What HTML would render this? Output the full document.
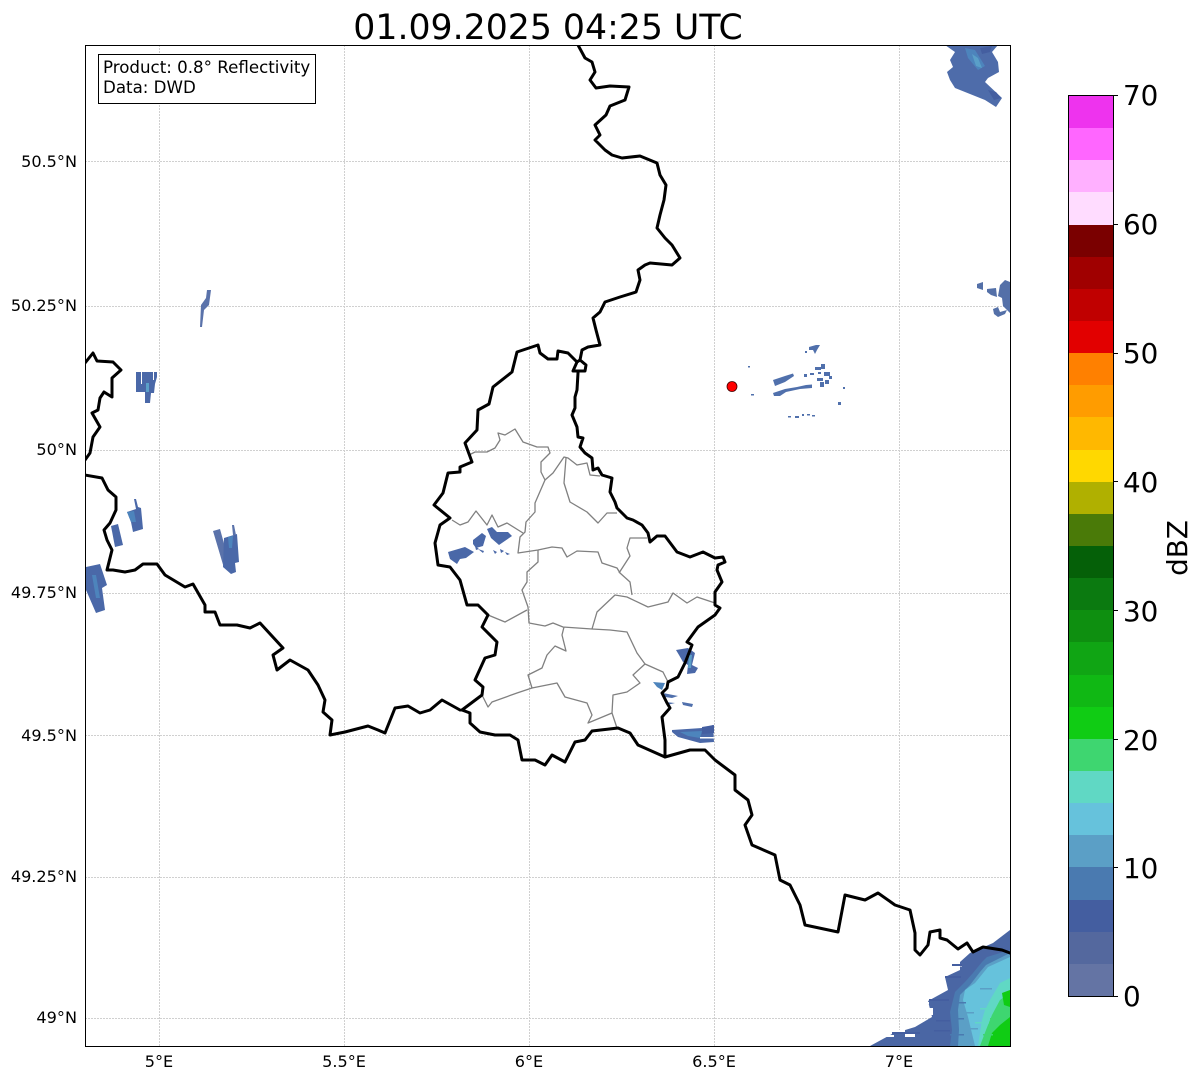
<!DOCTYPE html>
<html><head><meta charset="utf-8"><style>
html,body{margin:0;padding:0;background:#fff}
body{position:relative;width:1202px;height:1081px;overflow:hidden}
svg{display:block;position:absolute;left:0;top:0}
text,.l{font-family:"DejaVu Sans","Liberation Sans",sans-serif;color:#000;fill:#000}
.l{position:absolute;line-height:1;white-space:nowrap}
.y{right:1125px;font-size:16.1px}
.x{font-size:16.1px;top:1054px;transform:translateX(-50%)}
.c{left:1123px;font-size:27.8px}
.t{position:absolute;left:1113px;width:5px;height:1px;background:#000}
#fr{position:absolute;left:85px;top:45px;width:926px;height:1002px;box-sizing:border-box;border:1px solid #000}
#ib{position:absolute;left:98px;top:54px;width:218px;height:50px;box-sizing:border-box;border:1px solid #000;background:#fff}
#cb{position:absolute;left:1068px;top:95px;width:46px;height:902px;box-sizing:border-box;border:1px solid #000;display:flex;flex-direction:column-reverse}
#cb div{flex:1}
</style></head><body>
<svg width="1202" height="1081" viewBox="0 0 1202 1081" xmlns="http://www.w3.org/2000/svg">
<defs><clipPath id="ax"><rect x="85.5" y="45.5" width="925" height="1001"/></clipPath></defs>
<g clip-path="url(#ax)">
<g stroke="#d0d0d0" stroke-width="1" stroke-dasharray="2 1" fill="none">
<path d="M159.5 45V1046M344.5 45V1046M529.5 45V1046M714.5 45V1046M899.5 45V1046"/>
<path d="M85 161.5H1010M85 306.5H1010M85 450.5H1010M85 593.5H1010M85 735.5H1010M85 877.5H1010M85 1018.5H1010"/>
</g>
<!-- radar: top right -->
<g>
<path fill="#4e6caa" d="M945 45L998 45L992 52L998 62L999 72L988 78L985 82L1002 98L996 107L985 100L970 94L955 88L950 80L947 72L953 67L950 60L955 52Z"/>
<path fill="#4d84bc" d="M965 48L975 50L985 66L978 70L968 58Z"/>
<path fill="#5a9fc8" d="M972 54L978 58L982 68L976 66Z"/>
<path fill="#445ea0" d="M980 48L992 46L990 52L982 54ZM988 90L996 92L1001 98L994 100Z"/>
<!-- radar: right edge -->
<path fill="#5470a8" d="M977 284L983 282L983 290L977 288ZM987 289L996 288L997 297L991 295L987 292ZM1000 285L1005 280L1010 282V313L1003 306L1002 298L998 296ZM993 309L998 307L1000 312L1007 310L1005 314L998 317L994 314Z"/>
<!-- small centre-right -->
<g fill="#5070ac">
<path d="M773 380L785 376L793 373.500L794 376L785 382L775 386Z"/>
<path d="M773 393L785 389L797 387L806 385L812 384.500L812 388L800 389L786 392L780 396L774 396Z"/>
<path d="M809 347L816 345L820 345L817 350L815 354L813 350L809 350Z"/>
<rect x="815" y="367" width="6" height="3"/><rect x="821" y="364" width="4" height="5"/><rect x="824" y="372" width="6" height="4"/><rect x="817" y="378" width="6" height="3"/><rect x="820" y="382" width="4" height="5"/><rect x="825" y="380" width="4" height="4"/><rect x="829" y="376" width="3" height="3"/><rect x="818" y="372" width="3" height="2"/>
<rect x="804" y="374" width="3" height="3"/><rect x="810" y="373" width="4" height="2"/><rect x="748" y="366" width="2" height="1.500"/><rect x="751" y="394" width="3" height="1.500"/><rect x="843" y="387" width="2" height="2"/><rect x="838" y="402" width="3" height="3"/><rect x="788" y="416" width="3" height="1.500"/><rect x="795" y="416" width="4" height="2"/><rect x="802" y="414" width="2" height="2"/><rect x="807" y="414" width="3" height="1.500"/><rect x="812" y="415" width="3" height="1.500"/><rect x="805" y="351" width="2" height="2"/>
</g>
<!-- left echoes -->
<path fill="#4a68a8" d="M136 372H157V377L155 384L154 393L151 393L150 403L145 403L145 392L136 392Z"/>
<path fill="#5a9fc8" d="M146 383H149V392H146Z"/>
<path fill="#ffffff" d="M141 372H142V384H141ZM153 372H154V380H153Z"/>
<path fill="#4a68a8" d="M127 512L136 509L134 499L136 499L138 507L141 508L143 529L133 532L131 522Z"/>
<path fill="#4d84bc" d="M127 512L134 511L136 522L131 522Z"/>
<path fill="#4a68a8" d="M111 526L118 524L123 545L115 547Z"/>
<path fill="#4a68a8" d="M86 567L100 564L107 585L102 588L105 610L96 613L86 590Z"/>
<path fill="#4d84bc" d="M92 575L96 575L100 598L96 598Z"/>
<path fill="#5a72aa" d="M213 531L220 529L230 565L224 568Z"/>
<path fill="#4a68a8" d="M224 538L237 534L239 562L235 563L236 572L231 574L223 567Z"/>
<path fill="#4d84bc" d="M228 537L233 536L232 548L229 548Z"/>
<path fill="#5a72aa" d="M232 525L234 525L236 535L233 535Z"/>
<path fill="#5a72aa" d="M207 290L211 290L209 305L204 310L202 327L200 327L201 305L206 298Z"/>
<!-- centre Luxembourg echoes -->
<g fill="#4a68a8">
<path d="M448 552L465 547L474 552L466 558L460 559L457 564L450 559Z"/>
<path d="M473 540L482 533L486 536L483 546L476 548L473 544Z"/>
<path d="M487 529L492 527L497 532L508 532L512 536L499 545L491 538Z"/>
<path d="M478 549L484 551L483 553ZM493 550L497 552L495 554ZM500 549L504 551L501 553ZM505 552L510 554L507 555ZM475 546L479 549L476 550Z"/>
</g>
<!-- SE echoes -->
<path fill="#4a68a8" d="M676 650L688 648L695 653L692 665L698 668L695 673L687 674L688 665L683 662L679 655Z"/>
<path fill="#5a9fc8" d="M689 655L692 655L691 668L688 668Z"/>
<path fill="#4d84bc" d="M653 682L665 683L662 690L657 687Z"/>
<path fill="#5070ac" d="M663 693L678 696L672 698L665 697ZM665 702L675 703L667 705ZM682 702L693 704L692 707L683 705Z"/>
<path fill="#4a68a8" d="M672 730L702 728L713 725L714 742L700 743L678 737L672 732Z"/>
<path fill="#4d84bc" d="M680 732L702 731L700 738L688 736Z"/>
<path fill="#445ea0" d="M702 727L714 725L714 733L702 734Z"/>
<path fill="#fff" d="M700 737H714V738.500H700Z"/>
<!-- bottom right -->
<path fill="#4a66a4" d="M870 1046L892 1034L915 1027L932 1017L928 1001L948 990L945 977L960 970L960 962L970 953L993 943L1010 930V1046Z"/>
<path fill="#4a7ab0" d="M950 1046L952 1030L950 1012L955 992L965 982L973 973L982 962L987 957L1010 950V1046Z"/>
<path fill="#5b9fc6" d="M958 1046L959 1030L958 1010L960 995L970 985L980 972L986 965L1010 953V1046Z"/>
<path fill="#66c2dc" d="M975 1046L968 1017L963 1000L965 990L975 983L988 967L1010 957V1046Z"/>
<path fill="#60d8c4" d="M978 1046L982 1020L985 1010L990 1000L1000 983L1010 978V1046Z"/>
<path fill="#3ed670" d="M980 1046L986 1030L992 1015L1000 1000L1010 993V1046Z"/>
<path fill="#10cc14" d="M988 1046L992 1033L1000 1025L1010 1017V1046ZM1002 993L1010 990V1007L1004 1005Z"/>
<g fill="#fff">
<rect x="860" y="1035" width="34" height="2"/><rect x="885" y="1030" width="20" height="2"/><rect x="905" y="1034" width="10" height="3"/>
<rect x="915" y="1002" width="14" height="2"/><rect x="935" y="972" width="14" height="2.500"/><rect x="950" y="965" width="12" height="1.500"/>
<rect x="928" y="1008" width="5" height="7"/>
</g>
<g fill="#445ea0">
<rect x="892" y="1032" width="28" height="2"/><rect x="929" y="999" width="20" height="2"/><rect x="945" y="976" width="16" height="2"/><rect x="952" y="964" width="10" height="2"/>
<rect x="936" y="1020" width="14" height="1.500"/><rect x="934" y="1030" width="16" height="1.500"/>
</g>
<g fill="#4a7ab0"><rect x="952" y="1018" width="12" height="1.500"/><rect x="950" y="1034" width="14" height="1.500"/><rect x="958" y="1002" width="8" height="1.500"/></g>
<g fill="#5b9fc6"><rect x="962" y="1012" width="12" height="1.500"/><rect x="968" y="1028" width="10" height="1.500"/><rect x="980" y="988" width="12" height="1.500"/></g>
<g fill="#60d8c4"><rect x="975" y="1022" width="14" height="1.500"/><rect x="980" y="1008" width="12" height="1.500"/></g>
<g fill="#3ed670"><rect x="983" y="1034" width="10" height="1.500"/><rect x="990" y="1018" width="10" height="1.500"/></g>
<!-- gray admin borders -->
<g fill="none" stroke="#808080" stroke-width="1.300" stroke-linejoin="round">
<path d="M469 455L475 452L487 452L495 448L500 440L498 433L505 435L515 429L523 442L537 447L548 447L550 453L541 462L541 472L545 480L535 503L535 512L526 522L525 532L520 537L518 553L538 550L552 547L562 548L567 557L577 551L598 552L602 563L617 568L620 573L630 582L632 595"/>
<path d="M545 480L553 473L564 457L568 458L577 465L587 463L590 475L600 476"/>
<path d="M566 458L564 483L570 502L587 512L598 523L607 513L617 513"/>
<path d="M452 520L460 525L468 522L476 511L487 525L492 515L498 527L507 523L523 533"/>
<path d="M647 538L630 538L627 548L630 556L619 573"/>
<path d="M538 550L538 562L527 572L527 582L522 590L528 607L529 623L545 626L553 623L563 627L592 629L610 630L627 632L637 653L645 664L633 675L640 683L627 692L613 695L612 713L617 728"/>
<path d="M488 615L505 622L527 610"/>
<path d="M592 629L597 612L615 595L627 597L648 607L668 602L673 593L687 603L697 597L715 603"/>
<path d="M564 627L562 635L566 651L555 646L547 655L542 668L528 675L532 688L557 683L565 697L587 703L592 715L588 723L612 713"/>
<path d="M482 695L488 707L492 702L517 693L532 688"/>
<path d="M645 664L663 672L668 682"/>
</g>
<!-- black country borders -->
<g fill="none" stroke="#000" stroke-width="3" stroke-linejoin="round" stroke-linecap="round">
<path d="M578 45L585 58L592 62L595 72L590 80L596 88L610 86L629 87L625 100L610 106L606 115L595 125L600 135L595 140L605 150L612 155L622 158L640 156L657 163L660 175L666 185L664 200L660 215L657 228L665 238L672 245L680 258L672 265L650 263L645 265L638 270L640 280L636 292L620 297L605 302L600 312L593 318L596 330L600 345L588 347L582 350L580 360L586 365L585 371L573 371L577 362L580 360M578 373L577 390L575 397L575 408L572 415L577 427L578 437L583 438L580 447L585 453L592 458L593 470L598 468L602 475L612 478L610 492L615 502L617 508L627 518L633 520L642 525L648 533L650 542L657 536L665 536L677 552L690 557L703 552L715 558L723 557L725 562L718 565L717 570L722 582L715 592L715 605L720 608L715 615L698 627L687 642L692 645L685 663L678 677L668 682L667 688L662 693L667 703L670 708L662 717L665 740L665 757"/>
<path d="M577 362L568 353L558 351L557 359L548 359L540 353L538 345L517 352L512 372L493 387L489 404L478 410L477 430L465 443L472 462L460 467L460 472L448 473L443 493L434 505L450 518L440 525L435 543L438 565L450 567L460 580L467 605L478 605L488 615L482 627L497 642L495 655L485 658L475 680L483 687L482 695L462 710"/>
<path d="M462 710L470 713L470 723L480 732L495 735L510 735L518 740L522 760L535 760L545 765L552 755L565 762L575 742L585 740L592 731L618 728L630 733L638 745L665 757L690 750L705 750L715 760L735 775L735 790L748 800L752 815L745 825L752 845L775 855L780 880L790 885L800 905L805 925L838 932L845 895L865 900L878 893L895 905L910 910L915 933L915 950L920 955L928 945L930 932L940 930L940 938L947 940L958 949L967 943L973 952L983 947L1002 950L1010 953"/>
<path d="M85 363L93 353L97 361L113 362L121 370L112 378L112 397L104 392L100 398L98 410L92 413L100 427L93 437L90 453L85 460"/>
<path d="M85 475L102 478L108 490L116 497L116 510L110 523L104 530L107 540L112 550L107 570L113 570L125 572L135 570L143 564L157 564L165 575L185 587L193 584L205 605L205 612L215 612L220 625L237 625L250 628L260 623L283 648L273 655L277 670L290 660L308 670L318 685L325 700L323 712L332 720L330 735L345 732L368 726L378 730L385 733L395 708L408 706L420 713L430 710L442 700L460 710"/>
</g>
<circle cx="732" cy="386.500" r="5" fill="#f00" stroke="#400" stroke-width="0.800"/>
</g>
</svg>
<div id="fr"></div>
<div id="ib"></div>

<div class="l" style="left:103px;top:60px;font-size:16.67px">Product: 0.8° Reflectivity</div>
<div class="l" style="left:103px;top:80px;font-size:16.67px">Data: DWD</div>

<div class="l" style="left:548px;top:10.5px;font-size:34.7px;transform:translateX(-50%)">01.09.2025 04:25 UTC</div>

<div class="l y" style="top:153.5px">50.5°N</div>
<div class="l y" style="top:297.5px">50.25°N</div>
<div class="l y" style="top:441.5px">50°N</div>
<div class="l y" style="top:584.5px">49.75°N</div>
<div class="l y" style="top:727.5px">49.5°N</div>
<div class="l y" style="top:868.5px">49.25°N</div>
<div class="l y" style="top:1009.5px">49°N</div>

<div class="l x" style="left:159px">5°E</div>
<div class="l x" style="left:344px">5.5°E</div>
<div class="l x" style="left:529px">6°E</div>
<div class="l x" style="left:714px">6.5°E</div>
<div class="l x" style="left:899px">7°E</div>

<div id="cb">
<div style="background:#6474a4"></div><div style="background:#54689e"></div><div style="background:#445ea0"></div><div style="background:#4a7ab0"></div>
<div style="background:#5b9fc6"></div><div style="background:#66c2dc"></div><div style="background:#60d8c4"></div><div style="background:#3ed670"></div>
<div style="background:#10cc14"></div><div style="background:#10b814"></div><div style="background:#10a514"></div><div style="background:#0e8f10"></div>
<div style="background:#0b7a10"></div><div style="background:#056008"></div><div style="background:#4a7a08"></div><div style="background:#b0b000"></div>
<div style="background:#ffd800"></div><div style="background:#ffb800"></div><div style="background:#ff9c00"></div><div style="background:#ff8000"></div>
<div style="background:#e20000"></div><div style="background:#c00000"></div><div style="background:#a00000"></div><div style="background:#7a0000"></div>
<div style="background:#ffdcff"></div><div style="background:#ffb0ff"></div><div style="background:#ff66ff"></div><div style="background:#ee33ee"></div>
</div>
<div class="t" style="top:95px"></div><div class="t" style="top:224px"></div><div class="t" style="top:353px"></div><div class="t" style="top:481px"></div>
<div class="t" style="top:610px"></div><div class="t" style="top:739px"></div><div class="t" style="top:867px"></div><div class="t" style="top:996px"></div>

<div class="l c" style="top:81.5px">70</div>
<div class="l c" style="top:210.5px">60</div>
<div class="l c" style="top:339.5px">50</div>
<div class="l c" style="top:468.5px">40</div>
<div class="l c" style="top:597.5px">30</div>
<div class="l c" style="top:726.5px">20</div>
<div class="l c" style="top:854.5px">10</div>
<div class="l c" style="top:982.5px">0</div>

<div class="l" style="left:1178px;top:548px;font-size:27.8px;transform:translate(-50%,-50%) rotate(-90deg)">dBZ</div>
</body></html>
